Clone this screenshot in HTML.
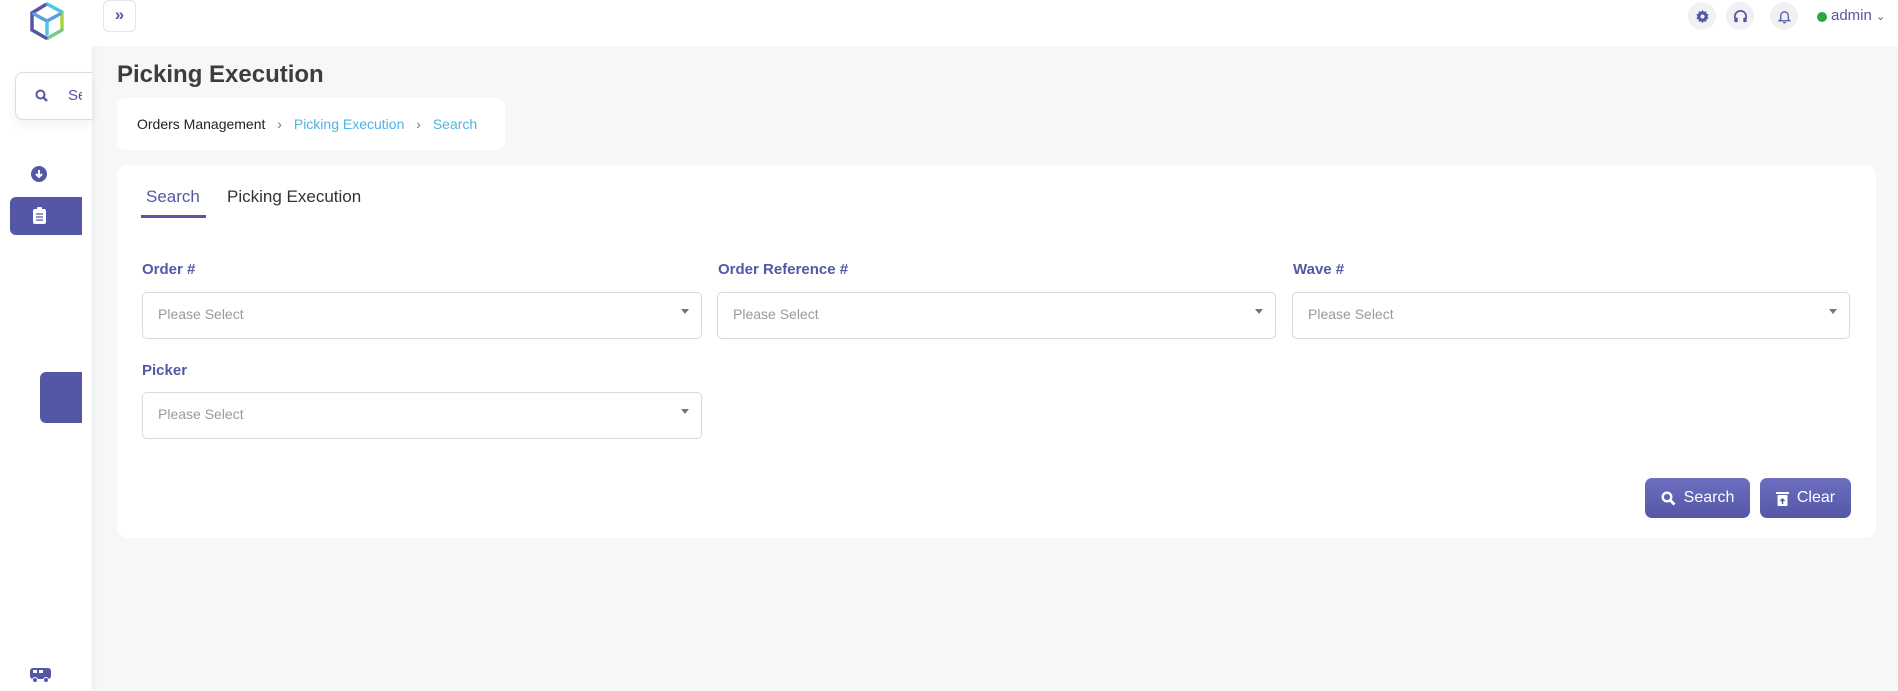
<!DOCTYPE html>
<html><head><meta charset="utf-8"><style>
*{box-sizing:border-box;margin:0;padding:0}
body{width:1898px;height:691px;overflow:hidden;background:#f6f7f9;font-family:"Liberation Sans",sans-serif;position:relative;color:#333}
.abs{position:absolute}
.side{left:0;top:0;width:92px;height:691px;background:#fff;box-shadow:2px 0 4px rgba(0,0,0,.04)}
.top{left:92px;top:0;width:1806px;height:46px;background:#fff}
.lbl{font-size:15px;font-weight:bold;color:#5457a6}
.sel{height:47px;border:1px solid #d9d9d9;border-radius:5px;background:#fff;font-size:14px;color:#9a9a9a;padding:13px 15px}
.sel:after{content:"";position:absolute;right:12px;top:16px;border:4px solid transparent;border-top:5px solid #777}
.btn{background:linear-gradient(#6c6fbf,#5457a6);color:#fff;border-radius:7px;font-size:16px;display:flex;align-items:center;justify-content:center;gap:8px}
.ic{border-radius:50%;background:#f1f1f3;width:28px;height:28px;display:flex;align-items:center;justify-content:center}
</style></head><body>
<div class="abs side"></div>
<svg class="abs" style="left:27px;top:1px" width="40" height="40" viewBox="0 0 40 40" fill="none" stroke-width="3.5" stroke-linecap="round">
<path d="M20 3 L35 11" stroke="#4fc3e8"/><path d="M35 13 L35 27" stroke="#a6d63c"/><path d="M35 29 L21 37" stroke="#7cc88a"/>
<path d="M19 37 L5 29 L5 12 L18 4" stroke="#5457a6"/><path d="M7 13 L20 20 L33 13" stroke="#5aa0e0"/><path d="M20 22 L20 33" stroke="#4fc3e8"/></svg>
<div class="abs" style="left:15px;top:72px;width:77px;height:48px;border:1px solid #ddd;border-right:none;border-radius:8px 0 0 8px;background:#fff;box-shadow:0 6px 10px rgba(0,0,0,.05);overflow:hidden"></div>
<svg class="abs" style="left:35px;top:89px" width="13" height="13" viewBox="0 0 13 13"><circle cx="5.5" cy="5.5" r="4" stroke="#5457a6" stroke-width="2" fill="none"/><path d="M8.5 8.5L12 12" stroke="#5457a6" stroke-width="2.4"/></svg>
<div class="abs" style="left:68px;top:87px;font-size:15px;color:#5457a6;width:14px;overflow:hidden;white-space:nowrap">Se</div>
<div class="abs" style="left:31px;top:166px;width:16px;height:16px;border-radius:50%;background:#5457a6"></div>
<svg class="abs" style="left:31px;top:166px" width="16" height="16"><path d="M8 4v7M5 8l3 3 3-3" stroke="#fff" stroke-width="2" fill="none"/></svg>
<div class="abs" style="left:10px;top:197px;width:72px;height:38px;background:#5457a6;border-radius:6px 0 0 6px"></div>
<svg class="abs" style="left:33px;top:207px" width="13" height="17"><rect x="0" y="2" width="13" height="15" rx="2" fill="#fff"/><rect x="4" y="0" width="5" height="4" rx="1" fill="#fff"/><path d="M3 7h7M3 10h7M3 13h7" stroke="#5457a6" stroke-width="1.3"/></svg>
<div class="abs" style="left:40px;top:372px;width:42px;height:51px;background:#5457a6;border-radius:6px 0 0 6px"></div>
<svg class="abs" style="left:30px;top:668px" width="21" height="15"><rect x="0" y="0" width="21" height="11" rx="3" fill="#5457a6"/><rect x="3" y="2" width="4" height="3" fill="#fff"/><rect x="9" y="2" width="4" height="3" fill="#fff"/><circle cx="5" cy="12" r="2.5" fill="#5457a6" stroke="#fff"/><circle cx="16" cy="12" r="2.5" fill="#5457a6" stroke="#fff"/></svg>
<div class="abs top"></div>
<div class="abs" style="left:103px;top:0;width:33px;height:32px;border:1px solid #e5e5e5;border-radius:6px;background:#fff;color:#5457a6;font-weight:bold;font-size:17px;text-align:center;line-height:28px">»</div>
<div class="abs ic" style="left:1688px;top:2px"><svg width="15" height="15" viewBox="0 0 16 16"><path d="M8 1l1.5 2 2.4-.6.3 2.5 2.3 1-1.2 2.1 1.2 2.1-2.3 1-.3 2.5-2.4-.6L8 15l-1.5-2-2.4.6-.3-2.5-2.3-1L2.7 8 1.5 5.9l2.3-1 .3-2.5 2.4.6z" fill="#5457a6"/><circle cx="8" cy="8" r="2.2" fill="#f1f1f3"/></svg></div>
<div class="abs ic" style="left:1726px;top:2px"><svg width="15" height="15" viewBox="0 0 16 16"><path d="M2 10V8a6 6 0 0 1 12 0v2" stroke="#5457a6" stroke-width="1.8" fill="none"/><rect x="1.5" y="9" width="3.5" height="5" rx="1" fill="#5457a6"/><rect x="11" y="9" width="3.5" height="5" rx="1" fill="#5457a6"/></svg></div>
<div class="abs ic" style="left:1770px;top:2px"><svg width="15" height="15" viewBox="0 0 16 16"><path d="M4 11V7a4 4 0 0 1 8 0v4l1.5 1.5h-11z" stroke="#5457a6" stroke-width="1.4" fill="none"/><path d="M6.5 14.5h3" stroke="#5457a6" stroke-width="1.4"/></svg></div>
<div class="abs" style="left:1817px;top:12px;width:10px;height:10px;border-radius:50%;background:#27a844"></div>
<div class="abs" style="left:1831px;top:7px;font-size:15px;color:#5457a6">admin <span style="font-size:11px">&#8964;</span></div>
<div class="abs" style="left:117px;top:61px;font-size:24px;font-weight:bold;color:#3d3d3d">Picking Execution</div>
<div class="abs" style="left:117px;top:98px;width:388px;height:52px;background:#fff;border-radius:9px;font-size:14px;padding:18px 20px;color:#222;white-space:nowrap">Orders Management <span style="color:#777;margin:0 8px">›</span> <span style="color:#4fb3e3">Picking Execution</span> <span style="color:#777;margin:0 8px">›</span> <span style="color:#4fb3e3">Search</span></div>
<div class="abs" style="left:117px;top:165px;width:1759px;height:373px;background:#fff;border-radius:10px"></div>
<div class="abs" style="left:146px;top:187px;font-size:17px;color:#5457a6">Search</div>
<div class="abs" style="left:141px;top:215px;width:65px;height:3px;background:#5457a6"></div>
<div class="abs" style="left:227px;top:187px;font-size:17px;color:#333">Picking Execution</div>
<div class="abs lbl" style="left:142px;top:261px">Order #</div>
<div class="abs lbl" style="left:718px;top:261px">Order Reference #</div>
<div class="abs lbl" style="left:1293px;top:261px">Wave #</div>
<div class="abs sel" style="left:142px;top:292px;width:560px">Please Select</div>
<div class="abs sel" style="left:717px;top:292px;width:559px">Please Select</div>
<div class="abs sel" style="left:1292px;top:292px;width:558px">Please Select</div>
<div class="abs lbl" style="left:142px;top:362px">Picker</div>
<div class="abs sel" style="left:142px;top:392px;width:560px">Please Select</div>
<div class="abs btn" style="left:1645px;top:478px;width:105px;height:40px"><svg width="15" height="15" viewBox="0 0 15 15"><circle cx="6" cy="6" r="4.3" stroke="#fff" stroke-width="2.4" fill="none"/><path d="M9.5 9.5L13.5 13.5" stroke="#fff" stroke-width="2.8"/></svg>Search</div>
<div class="abs btn" style="left:1760px;top:478px;width:91px;height:40px"><svg width="13" height="15" viewBox="0 0 13 15"><rect x="0" y="1" width="13" height="2" fill="#fff"/><rect x="1.5" y="4" width="10" height="11" rx="1" fill="#fff"/><path d="M6.5 13V8M4.5 10l2-2 2 2" stroke="#5457a6" stroke-width="1.4" fill="none"/></svg>Clear</div>
</body></html>
